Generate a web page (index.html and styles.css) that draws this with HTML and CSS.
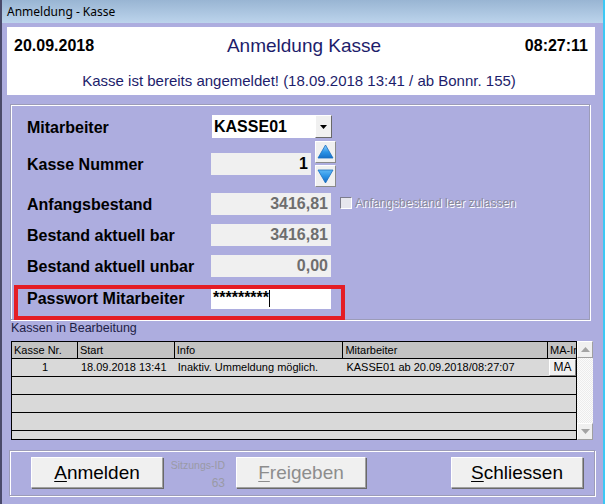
FILE: index.html
```html
<!DOCTYPE html>
<html>
<head>
<meta charset="utf-8">
<title>Anmeldung - Kasse</title>
<link rel="stylesheet" href="styles.css">
</head>
<body>
<div class="window">
  <div class="titlebar">Anmeldung - Kasse</div>
  <div class="client">
    <div class="header">
      <div class="header-top">
        <span class="date">20.09.2018</span>
        <span class="title">Anmeldung Kasse</span>
        <span class="time">08:27:11</span>
      </div>
      <div class="notice">Kasse ist bereits angemeldet! (18.09.2018 13:41 / ab Bonnr. 155)</div>
    </div>

    <div class="group form">
      <div class="row r1">
        <span class="label">Mitarbeiter</span>
        <div class="combo">
          <span class="combo-text">KASSE01</span>
          <span class="combo-btn"><svg width="7" height="4" viewBox="0 0 7 4"><polygon points="0,0 7,0 3.5,4" fill="#000"/></svg></span>
        </div>
      </div>
      <div class="row r2">
        <span class="label">Kasse Nummer</span>
        <div class="field short dark">1</div>
        <div class="spinner">
          <span class="spin-btn"><svg width="17" height="16" viewBox="0 0 17 16"><defs><linearGradient id="gu" x1="0" y1="0" x2="0" y2="1"><stop offset="0" stop-color="#8fd0ff"/><stop offset="0.55" stop-color="#2a93e6"/><stop offset="1" stop-color="#1670c8"/></linearGradient></defs><polygon points="8.5,1 16,14 1,14" fill="url(#gu)" stroke="#1a6fc0" stroke-width="0.8"/></svg></span>
          <span class="spin-btn"><svg width="17" height="16" viewBox="0 0 17 16"><defs><linearGradient id="gd" x1="0" y1="0" x2="0" y2="1"><stop offset="0" stop-color="#5db7f5"/><stop offset="0.5" stop-color="#2a93e6"/><stop offset="1" stop-color="#1466c0"/></linearGradient></defs><polygon points="1,2 16,2 8.5,15" fill="url(#gd)" stroke="#1a6fc0" stroke-width="0.8"/></svg></span>
        </div>
      </div>
      <div class="row r3">
        <span class="label">Anfangsbestand</span>
        <div class="field">3416,81</div>
        <span class="check"></span>
        <span class="check-label">Anfangsbestand leer zulassen</span>
      </div>
      <div class="row r4">
        <span class="label">Bestand aktuell bar</span>
        <div class="field">3416,81</div>
      </div>
      <div class="row r5">
        <span class="label">Bestand aktuell unbar</span>
        <div class="field">0,00</div>
      </div>
      <div class="row r6 highlight">
        <span class="label">Passwort Mitarbeiter</span>
        <div class="field password">*********<span class="caret"></span></div>
      </div>
    </div>

    <div class="list-label">Kassen in Bearbeitung</div>
    <div class="list">
      <div class="grid">
        <div class="grid-head">
          <span class="c1">Kasse Nr.</span>
          <span class="c2">Start</span>
          <span class="c3">Info</span>
          <span class="c4">Mitarbeiter</span>
          <span class="c5">MA-In</span>
        </div>
        <div class="grid-row">
          <span class="c1 center">1</span>
          <span class="c2">18.09.2018 13:41</span>
          <span class="c3">Inaktiv. Ummeldung möglich.</span>
          <span class="c4">KASSE01 ab 20.09.2018/08:27:07</span>
          <span class="c5"><span class="ma-btn">MA</span></span>
        </div>
        <div class="grid-row empty"></div>
        <div class="grid-row empty"></div>
        <div class="grid-row empty"></div>
      </div>
      <div class="scrollbar">
        <span class="sb-btn"><svg width="9" height="5" viewBox="0 0 9 5"><polygon points="4.5,0 9,5 0,5" fill="#a3a3a3"/></svg></span>
        <span class="sb-track"></span>
        <span class="sb-btn"><svg width="9" height="5" viewBox="0 0 9 5"><polygon points="0,0 9,0 4.5,5" fill="#a3a3a3"/></svg></span>
      </div>
    </div>

    <div class="group actions">
      <button class="btn"><u>A</u>nmelden</button>
      <div class="session">
        <span class="session-label">Sitzungs-ID</span>
        <span class="session-id">63</span>
      </div>
      <button class="btn disabled"><u>F</u>reigeben</button>
      <button class="btn close"><u>S</u>chliessen</button>
    </div>
  </div>
</div>
</body>
</html>
```
FILE: styles.css
```css
*, *::before, *::after { box-sizing: border-box; }
html, body { margin: 0; padding: 0; }
body {
  font-family: "Liberation Sans", Arial, sans-serif;
  background: #adaddf;
}
.window {
  width: 605px;
  height: 504px;
  background: #adaddf;
  border-left: 2px solid #4a4a6a;
  border-right: 2px solid #3cc8f4;
  overflow: hidden;
}
.titlebar {
  height: 23px;
  background: linear-gradient(#99b5d3, #bcd4ec);
  font-family: "Noto Sans", "Liberation Sans", sans-serif;
  font-size: 12px;
  line-height: 23px;
  padding-left: 5px;
  color: #000;
}
.client {
  padding: 4px 0 0 5px;
}
.header {
  width: 588px;
  height: 68px;
  background: #fff;
  padding: 8px 7px 0 7px;
  color: #1d1d6b;
}
.header-top {
  display: flex;
  justify-content: space-between;
  align-items: center;
  height: 22px;
}
.date, .time {
  font-weight: bold;
  font-size: 16px;
  color: #000;
  width: 120px;
}
.time { text-align: right; }
.title {
  font-size: 19px;
  color: #1d1d6b;
  margin-left: 6px;
}
.notice {
  text-align: center;
  font-size: 15px;
  margin-top: 15px;
  padding-right: 4px;
}

.group {
  border: 1px solid #9c9cb8;
  box-shadow: inset 1px 1px 0 #fff, 1px 1px 0 #fff;
}
.form {
  width: 580px;
  height: 216px;
  margin: 9px 0 0 3px;
  padding: 10px 0 0 16px;
}
.row {
  display: flex;
  align-items: center;
  height: 22px;
}
.r1 { height: 23px; }
.r2 { height: 46px; margin-top: 3px; }
.r3 { height: 23px; margin-top: 5px; }
.r4 { margin-top: 9px; }
.r5 { margin-top: 9px; }
.r6 { margin-top: 10px; }
.label {
  width: 184px;
  font-weight: bold;
  font-size: 16px;
  color: #000;
  padding-top: 2px;
}
.combo {
  display: flex;
  height: 23px;
  margin-left: 1px;
}
.combo-text {
  width: 103px;
  background: #fff;
  font-weight: bold;
  font-size: 16px;
  line-height: 23px;
  padding-left: 2px;
}
.combo-btn {
  width: 17px;
  height: 23px;
  background: #f0f0f0;
  border-top: 1px solid #fff;
  border-left: 1px solid #fff;
  border-right: 1px solid #696969;
  border-bottom: 1px solid #696969;
  display: flex;
  align-items: center;
  justify-content: center;
}
.field {
  width: 120px;
  height: 22px;
  background: #f0f0f0;
  text-align: right;
  padding-right: 3px;
  font-weight: bold;
  font-size: 16px;
  line-height: 22px;
  color: #6e6e6e;
}
.field.short { width: 100px; }
.field.dark { color: #000; }
.spinner {
  display: flex;
  flex-direction: column;
  gap: 2px;
  margin-left: 4px;
}
.spin-btn {
  width: 21px;
  height: 22px;
  background: #f0f0f0;
  border-top: 1px solid #fff;
  border-left: 1px solid #fff;
  border-right: 1px solid #8a8a8a;
  border-bottom: 1px solid #8a8a8a;
  display: flex;
  align-items: center;
  justify-content: center;
}
.check {
  width: 12px;
  height: 12px;
  margin-left: 9px;
  background: #e6e6ee;
  border-top: 1px solid #7c7c8c;
  border-left: 1px solid #7c7c8c;
  border-right: 1px solid #fff;
  border-bottom: 1px solid #fff;
  margin-top: -2px;
}
.check-label {
  margin-left: 3px;
  font-size: 12px;
  color: #8a8a9c;
  text-shadow: 1px 1px 0 #fff;
  margin-top: -2px;
}
.password {
  background: #fff;
  text-align: left;
  padding-left: 2px;
  color: #000;
  display: flex;
  align-items: center;
}
.caret {
  display: inline-block;
  width: 1px;
  height: 17px;
  background: #000;
}
.highlight { position: relative; }
.highlight::after {
  content: "";
  position: absolute;
  left: -13px;
  top: -2px;
  width: 331px;
  height: 35px;
  border: 4px solid #e41d25;
}

.list-label {
  font-size: 12.5px;
  color: #1e1e46;
  height: 14px;
  line-height: 14px;
  margin: 1px 0 6px 4px;
}
.list {
  display: flex;
  width: 582px;
  height: 99px;
  margin-left: 4px;
}
.grid {
  width: 566px;
  height: 99px;
  border: 1px solid #000;
  background: #d9d9d9;
  font-size: 11px;
  overflow: hidden;
}
.grid-head, .grid-row {
  display: flex;
  border-bottom: 1px solid #000;
}
.grid-head {
  height: 17px;
  background: #c3c3c3;
  line-height: 16px;
}
.grid-head span {
  border-right: 1px solid #000;
  padding-left: 2px;
  white-space: nowrap;
  overflow: hidden;
}
.grid-row { height: 18px; line-height: 17px; }
.grid-row span { white-space: nowrap; overflow: hidden; padding-left: 3px; }
.c1 { width: 66px; }
.c2 { width: 97px; }
.c3 { width: 169px; }
.c4 { width: 205px; }
.c5 { width: 28px; }
.grid-head .c5 { border-right: 0; }
.grid-row .center { text-align: center; padding-left: 0; }
.grid-row .c5 { padding-left: 1px; display: flex; }
.ma-btn {
  width: 27px;
  height: 17px;
  background: #f0f0f0;
  border-top: 1px solid #fff;
  border-left: 1px solid #fff;
  border-right: 1px solid #808080;
  border-bottom: 1px solid #808080;
  font-size: 12px;
  text-align: center;
  line-height: 15px;
}
.grid-row .ma-btn { padding-left: 0; }
.scrollbar {
  width: 16px;
  height: 99px;
  display: flex;
  flex-direction: column;
  background-color: #f4f4f4;
  background-image: repeating-conic-gradient(#fbfbfb 0 25%, #ececec 0 50%);
  background-size: 2px 2px;
}
.sb-btn {
  width: 16px;
  height: 17px;
  background: #f0f0f0;
  border-top: 1px solid #fff;
  border-left: 1px solid #fff;
  border-right: 1px solid #a0a0a0;
  border-bottom: 1px solid #a0a0a0;
  display: flex;
  align-items: center;
  justify-content: center;
}
.sb-track { flex: 1; }

.actions {
  width: 586px;
  height: 46px;
  margin: 10px 0 0 2px;
  padding: 6px 0 0 21px;
  display: flex;
  align-items: flex-start;
}
.btn {
  width: 132px;
  height: 31px;
  background: #f0f0f0;
  border-top: 1px solid #fff;
  border-left: 1px solid #fff;
  border-right: 1px solid #a0a0a0;
  border-bottom: 1px solid #a0a0a0;
  box-shadow: 1px 1px 0 #696969;
  font-family: "Liberation Sans", Arial, sans-serif;
  font-size: 19px;
  color: #000;
  padding: 0;
  flex-shrink: 0;
}
.btn u { text-decoration-thickness: 1px; text-underline-offset: 2px; }
.btn.disabled {
  width: 130px;
  color: #8d8d8d;
  margin-left: 11px;
}
.btn.close { margin-left: 85px; }
.session {
  width: 54px;
  flex-shrink: 0;
  margin-left: 8px;
  display: flex;
  flex-direction: column;
  align-items: flex-end;
  color: #9a9aa6;
  padding-top: 2px;
  white-space: nowrap;
}
.session-label { font-size: 10.5px; line-height: 13px; }
.session-id { font-size: 12px; line-height: 16px; margin-top: 3px; }
```
